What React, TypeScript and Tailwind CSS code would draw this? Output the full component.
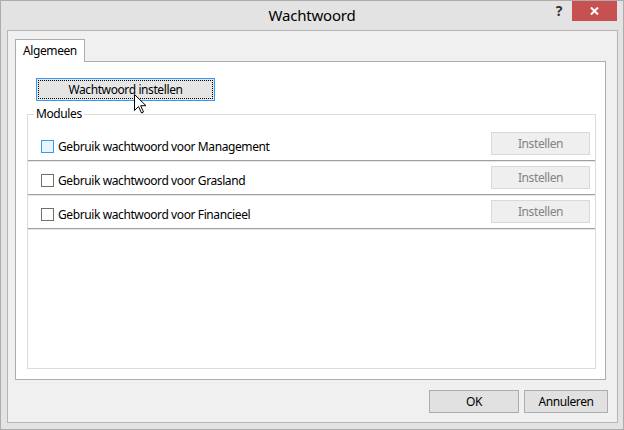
import React from "react";

const font = { fontFamily: '"Noto Sans", "Open Sans", sans-serif' };

function Row({ label, hover }: { label: string; hover?: boolean }) {
  return (
    <div className="flex flex-col">
      <div className="h-[33px] flex items-center justify-between pl-[13px] pr-[5px]">
        <div className="flex items-center mt-[6px]">
          <div
            className={
              hover
                ? "w-[13px] h-[13px] border border-[#3399ff] bg-[#eaf4fd]"
                : "w-[13px] h-[13px] border border-[#707070] bg-white"
            }
          />
          <span className="ml-[4px] text-[12px] leading-[13px] text-black">{label}</span>
        </div>
        <div className="w-[99px] h-[23px] border border-[#d9d9d9] bg-[#efefef] flex items-center justify-center text-[12px] text-[#838383]">
          Instellen
        </div>
      </div>
      <div className="h-px bg-[#a0a0a0] shadow-[0_1px_0_#e6e6e6]" />
    </div>
  );
}

export default function App() {
  return (
    <div
      className="w-[624px] h-[430px] bg-[#e3e3e3] border border-[#adadad] flex flex-col select-none tracking-[-0.4px]"
      style={font}
    >
      {/* title bar */}
      <div className="h-[29px] grid grid-cols-[1fr_auto_1fr] items-start">
        <div />
        <div className="text-[15px] leading-[29px] text-black tracking-[-0.2px]">Wachtwoord</div>
        <div className="flex justify-end pr-[6px]">
          <div className="mt-[2px] mr-[10px] text-[14px] font-bold leading-[16px] text-[#333]">?</div>
          <div className="w-[45px] h-[20px] bg-[#c75050] flex items-center justify-center">
            <svg width="9" height="8" viewBox="0 0 9 8">
              <path d="M1 0.5 L8 7.5 M8 0.5 L1 7.5" stroke="white" strokeWidth="2" />
            </svg>
          </div>
        </div>
      </div>
      {/* client */}
      <div className="flex-1 mx-[6px] mb-[6px] mr-[5px] border border-[#b5b5b5] bg-[#f0f0f0] flex flex-col pl-[7px] pr-[9px] pt-[8px] pb-[9px]">
        <div className="flex">
          <div className="h-[23px] w-[70px] -mb-px relative z-10 border border-b-0 border-[#adadad] bg-white pl-[7px] text-[12px] leading-[22px] text-black">
            Algemeen
          </div>
        </div>
        <div className="flex-1 mr-[2px] border border-[#adadad] bg-white flex flex-col pl-[20px] pr-[9px] pt-[16px] pb-[10px] relative">
          <div className="w-[179px] h-[23px] border border-[#3399ff] bg-[#e5e5e5] p-[1px]">
            <div className="w-full h-full border border-dotted border-black flex items-center justify-center text-[12px] text-black">
              Wachtwoord instellen
            </div>
          </div>
          {/* cursor */}
          <svg
            className="absolute left-[118px] top-[32px]"
            width="13"
            height="20"
            viewBox="0 0 13 20"
          >
            <path
              d="M0.5 0.5 L0.5 16.5 L4.5 12.5 L7.5 19 L9.5 18 L6.7 11.7 L12 11.7 Z"
              fill="white"
              stroke="black"
              strokeWidth="1"
              strokeLinejoin="miter"
            />
          </svg>
          {/* group box */}
          <div className="flex-1 -ml-[9px] mt-[13px] border border-[#dcdcdc] flex flex-col pt-[12px] relative">
            <div className="absolute -top-[8px] left-[6px] bg-white px-[2px] text-[12px] leading-[14px] text-black">
              Modules
            </div>
            <Row label="Gebruik wachtwoord voor Management" hover />
            <Row label="Gebruik wachtwoord voor Grasland" />
            <Row label="Gebruik wachtwoord voor Financieel" />
          </div>
        </div>
        <div className="mt-[10px] flex justify-end gap-[5px]">
          <div className="w-[90px] h-[23px] border border-[#adadad] bg-[#e1e1e1] flex items-center justify-center text-[12px] text-black">
            OK
          </div>
          <div className="w-[84px] h-[23px] border border-[#adadad] bg-[#e1e1e1] flex items-center justify-center text-[12px] text-black">
            Annuleren
          </div>
        </div>
      </div>
    </div>
  );
}
